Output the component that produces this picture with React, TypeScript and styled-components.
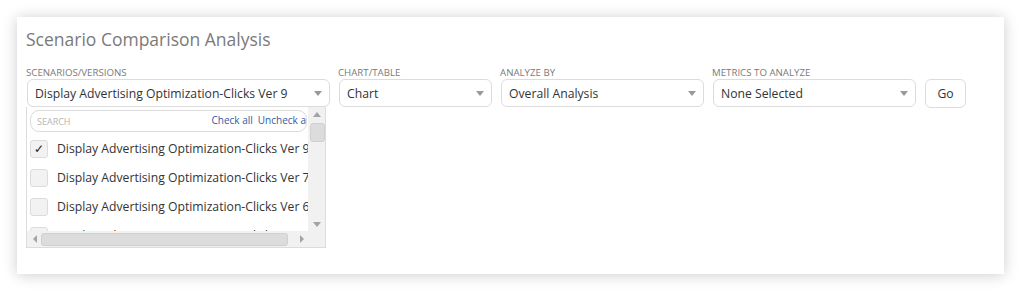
import React from "react";
import styled, { createGlobalStyle } from "styled-components";

const GlobalStyle = createGlobalStyle`
  html, body { margin: 0; padding: 0; background: #fff; }
  body { font-family: "Open Sans", "Liberation Sans", sans-serif; }
  * { box-sizing: border-box; }
`;

const Page = styled.div`
  padding: 17px;
`;

const Card = styled.section`
  width: 987px;
  height: 257px;
  background: #fff;
  box-shadow: 0 1px 14px rgba(0, 0, 0, 0.2);
  padding: 10px 9px;
`;

const Title = styled.h2`
  margin: 0;
  font-size: 17.5px;
  line-height: 24px;
  font-weight: 400;
  color: #7a7a7a;
`;

const Filters = styled.div`
  display: flex;
  align-items: flex-end;
  gap: 9px;
  margin-top: 16px;
  padding-left: 1px;
`;

const Field = styled.div<{ $w: number }>`
  position: relative;
  width: ${(p) => p.$w}px;
  display: flex;
  flex-direction: column;
`;

const Label = styled.label`
  font-size: 9.7px;
  line-height: 11px;
  color: #7a7a7a;
  text-transform: uppercase;
  margin-bottom: 1px;
  margin-left: -1px;
`;

const SelectBox = styled.div`
  height: 28px;
  border: 1px solid #dcdcdc;
  border-radius: 6px;
  background: #fff;
  display: flex;
  align-items: center;
  padding: 0 7px 0 7px;
  font-size: 12.2px;
  color: #333;
`;

const SelectText = styled.span`
  flex: 1;
  white-space: nowrap;
  overflow: hidden;
`;

const Caret = styled.span`
  width: 0;
  height: 0;
  border-left: 4.5px solid transparent;
  border-right: 4.5px solid transparent;
  border-top: 5px solid #999;
`;

const GoButton = styled.button`
  width: 41px;
  height: 29px;
  border: 1px solid #dcdcdc;
  border-radius: 6px;
  background: #fff;
  font-family: inherit;
  font-size: 12.2px;
  color: #333;
  padding: 0;
  margin-bottom: -1px;
`;

const Dropdown = styled.div`
  position: absolute;
  left: -1px;
  top: 100%;
  width: 300px;
  height: 141px;
  border: 1px solid #dcdcdc;
  border-top: none;
  background: #fff;
  display: grid;
  grid-template-columns: 1fr 17px;
  grid-template-rows: 1fr 16px;
  z-index: 5;
`;

const ListViewport = styled.div`
  overflow: hidden;
  padding: 3px 0 0 3px;
`;

const SearchBox = styled.div`
  width: 277px;
  height: 22px;
  border: 1px solid #dcdcdc;
  border-radius: 9px;
  display: flex;
  align-items: center;
  padding-left: 6px;
  overflow: hidden;
  margin-bottom: 2px;
`;

const SearchPlaceholder = styled.span`
  flex: 1;
  font-size: 9px;
  color: #b5b5b5;
  text-transform: uppercase;
  margin-top: 1px;
`;

const Links = styled.span`
  display: flex;
  gap: 5px;
  white-space: nowrap;
  flex-shrink: 0;
  margin-right: -5px;
  font-size: 10px;
  color: #2d5aa8;
  margin-top: -3px;
`;

const Item = styled.div`
  height: 29px;
  display: flex;
  align-items: center;
  gap: 9px;
  white-space: nowrap;
  font-size: 12.2px;
  color: #333;
`;

const Check = styled.span`
  width: 18px;
  height: 18px;
  flex-shrink: 0;
  border: 1px solid #dcdcdc;
  border-radius: 3px;
  background: #f2f2f2;
  display: flex;
  align-items: center;
  justify-content: center;
  font-size: 12px;
  color: #222;
`;

const VBar = styled.div`
  background: #f1f1f1;
  display: flex;
  flex-direction: column;
  align-items: center;
  padding: 5px 1px 0 2px;
`;

const HBar = styled.div`
  background: #f1f1f1;
  display: flex;
  align-items: center;
  padding: 0 4px 0 6px;
  gap: 4px;
`;

const Corner = styled.div`
  background: #f1f1f1;
`;

const Arrow = styled.span<{ $dir: "up" | "down" | "left" | "right" }>`
  width: 0;
  height: 0;
  flex-shrink: 0;
  ${(p) =>
    p.$dir === "up"
      ? "border-left: 4.5px solid transparent; border-right: 4.5px solid transparent; border-bottom: 5px solid #a3a3a3;"
      : p.$dir === "down"
      ? "border-left: 4.5px solid transparent; border-right: 4.5px solid transparent; border-top: 5px solid #a3a3a3;"
      : p.$dir === "left"
      ? "border-top: 4px solid transparent; border-bottom: 4px solid transparent; border-right: 4px solid #a3a3a3;"
      : "border-top: 4px solid transparent; border-bottom: 4px solid transparent; border-left: 4px solid #a3a3a3;"}
`;

const VThumb = styled.div`
  width: 15px;
  height: 19px;
  margin-top: 6px;
  background: #dcdcdc;
  border: 1px solid #d0d0d0;
  border-radius: 3px;
`;

const VSpacer = styled.div<{ $fixed?: number }>`
  flex: ${(p) => (p.$fixed ? `0 0 ${p.$fixed}px` : "1")};
`;

const HThumb = styled.div`
  flex: 0 0 247px;
  height: 13px;
  background: #dcdcdc;
  border: 1px solid #d0d0d0;
  border-radius: 3px;
`;

const HSpacer = styled.div`
  flex: 1;
`;

const items = [
  { label: "Display Advertising Optimization-Clicks Ver 9", checked: true },
  { label: "Display Advertising Optimization-Clicks Ver 7", checked: false },
  { label: "Display Advertising Optimization-Clicks Ver 6", checked: false },
  { label: "Display Advertising Optimization-Clicks Ver 5", checked: false },
];

export default function App() {
  return (
    <>
      <GlobalStyle />
      <Page>
        <Card>
          <Title>Scenario Comparison Analysis</Title>
          <Filters>
            <Field $w={303}>
              <Label>Scenarios/Versions</Label>
              <SelectBox>
                <SelectText>Display Advertising Optimization-Clicks Ver 9</SelectText>
                <Caret />
              </SelectBox>
              <Dropdown>
                <ListViewport>
                  <SearchBox>
                    <SearchPlaceholder>Search</SearchPlaceholder>
                    <Links>
                      <span>Check all</span>
                      <span>Uncheck all</span>
                    </Links>
                  </SearchBox>
                  {items.map((it) => (
                    <Item key={it.label}>
                      <Check>{it.checked ? "✓" : ""}</Check>
                      {it.label}
                    </Item>
                  ))}
                </ListViewport>
                <VBar>
                  <Arrow $dir="up" />
                  <VThumb />
                  <VSpacer />
                  <Arrow $dir="down" />
                  <VSpacer $fixed={4} />
                </VBar>
                <HBar>
                  <Arrow $dir="left" />
                  <HThumb />
                  <HSpacer />
                  <Arrow $dir="right" />
                </HBar>
                <Corner />
              </Dropdown>
            </Field>
            <Field $w={153}>
              <Label>Chart/Table</Label>
              <SelectBox>
                <SelectText>Chart</SelectText>
                <Caret />
              </SelectBox>
            </Field>
            <Field $w={203}>
              <Label>Analyze By</Label>
              <SelectBox>
                <SelectText>Overall Analysis</SelectText>
                <Caret />
              </SelectBox>
            </Field>
            <Field $w={203}>
              <Label>Metrics to Analyze</Label>
              <SelectBox>
                <SelectText>None Selected</SelectText>
                <Caret />
              </SelectBox>
            </Field>
            <GoButton>Go</GoButton>
          </Filters>
        </Card>
      </Page>
    </>
  );
}
